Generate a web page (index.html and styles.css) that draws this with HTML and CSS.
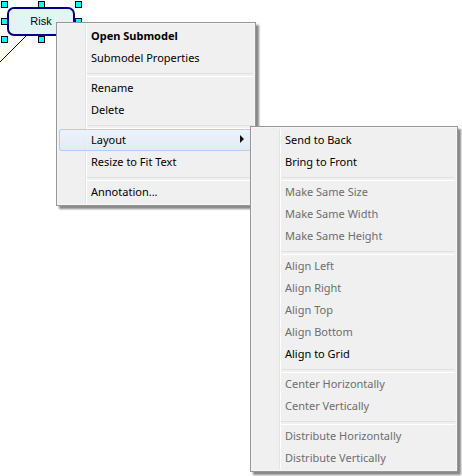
FILE: index.html
```html
<!DOCTYPE html>
<html lang="en">
<head>
  <meta charset="UTF-8">
  <title>Risk</title>
  <link rel="stylesheet" href="styles.css">
</head>
<body>

  <!-- Diagram -->
  <div class="diagram">
    <svg class="arrow" width="30" height="30" viewBox="0 0 30 30" aria-hidden="true">
      <path d="M0 27L27 0" stroke="#000080" fill="none" shape-rendering="crispEdges"/>
    </svg>
    <div class="node">
      <span>Risk</span>
      <i class="handle top left"></i>
      <i class="handle top center"></i>
      <i class="handle top right"></i>
      <i class="handle middle left"></i>
      <i class="handle middle right"></i>
      <i class="handle bottom left"></i>
      <i class="handle bottom center"></i>
      <i class="handle bottom right"></i>
    </div>
  </div>

  <!-- Context menu -->
  <ul class="menu context-menu">
    <li><button class="default">Open Submodel</button></li>
    <li><button>Submodel Properties</button></li>
    <li class="separator"></li>
    <li><button>Rename</button></li>
    <li><button>Delete</button></li>
    <li class="separator"></li>
    <li class="has-submenu">
      <button class="selected">Layout
        <svg width="4" height="8" viewBox="0 0 4 8" aria-hidden="true"><path d="M0 0L4 4L0 8Z" fill="#111"/></svg>
      </button>

      <!-- Layout submenu -->
      <ul class="menu submenu">
        <li><button>Send to Back</button></li>
        <li><button>Bring to Front</button></li>
        <li class="separator"></li>
        <li><button disabled>Make Same Size</button></li>
        <li><button disabled>Make Same Width</button></li>
        <li><button disabled>Make Same Height</button></li>
        <li class="separator"></li>
        <li><button disabled>Align Left</button></li>
        <li><button disabled>Align Right</button></li>
        <li><button disabled>Align Top</button></li>
        <li><button disabled>Align Bottom</button></li>
        <li><button>Align to Grid</button></li>
        <li class="separator"></li>
        <li><button disabled>Center Horizontally</button></li>
        <li><button disabled>Center Vertically</button></li>
        <li class="separator"></li>
        <li><button disabled>Distribute Horizontally</button></li>
        <li><button disabled>Distribute Vertically</button></li>
      </ul>
    </li>
    <li><button>Resize to Fit Text</button></li>
    <li class="separator"></li>
    <li><button>Annotation...</button></li>
  </ul>

</body>
</html>
```
FILE: styles.css
```css
* {
  box-sizing: border-box;
}
body {
  margin: 0;
  background: #fff;
  font-family: "Segoe UI", "Noto Sans", sans-serif;
  font-size: 11px;
}

/* Diagram */
.node {
  position: absolute;
  left: 7px;
  top: 7px;
  width: 68px;
  height: 29px;
  padding-bottom: 2px;
  border: 2px solid #000080;
  border-radius: 7px;
  background: #e2f5f5;
  display: flex;
  align-items: center;
  justify-content: center;
  font-family: Arial, "Liberation Sans", sans-serif;
}
.arrow {
  position: absolute;
  left: 0;
  top: 35px;
}
.handle {
  position: absolute;
  width: 7px;
  height: 7px;
  border: 1px solid #000;
  background: #00ffff;
}
.handle.left { left: -8px; }
.handle.center { left: 29px; }
.handle.right { right: -9px; }
.handle.top { top: -8px; }
.handle.middle { top: 9px; }
.handle.bottom { bottom: -9px; }

/* Menus */
.menu {
  position: absolute;
  margin: 0;
  padding: 2px;
  list-style: none;
  border: 1px solid #979797;
  background: linear-gradient(90deg, transparent 26px, #e2e3e3 26px, #e2e3e3 27px, #fff 27px, #fff 28px, transparent 28px) content-box, #f0f0f0;
  box-shadow: inset 0 0 0 1px #f5f5f5, 3px 3px 2px #888;
}
.context-menu {
  left: 56px;
  top: 22px;
  width: 200px;
}
.has-submenu {
  position: relative;
}
.submenu {
  left: calc(100% - 3px);
  top: -3px;
  width: 208px;
  z-index: 1;
}
.menu button {
  display: flex;
  align-items: center;
  justify-content: space-between;
  width: 100%;
  height: 22px;
  margin: 0;
  padding: 0 9px 2px 32px;
  border: none;
  background: none;
  color: #000;
  font: inherit;
  text-align: left;
}
.menu button.default {
  font-weight: bold;
}
.menu button:disabled {
  color: #6d6d6d;
}
.menu button.selected,
.menu button:enabled:hover {
  border-radius: 3px;
  background: linear-gradient(rgba(240, 244, 250, 0.8), rgba(220, 232, 248, 0.8));
  box-shadow: inset 0 0 0 1px #aecff7;
}
.separator {
  height: 8px;
  padding: 4px 0 2px 28px;
}
.separator::before {
  content: "";
  display: block;
  height: 2px;
  border-top: 1px solid #e0e0e0;
  border-bottom: 1px solid #fff;
}
```
